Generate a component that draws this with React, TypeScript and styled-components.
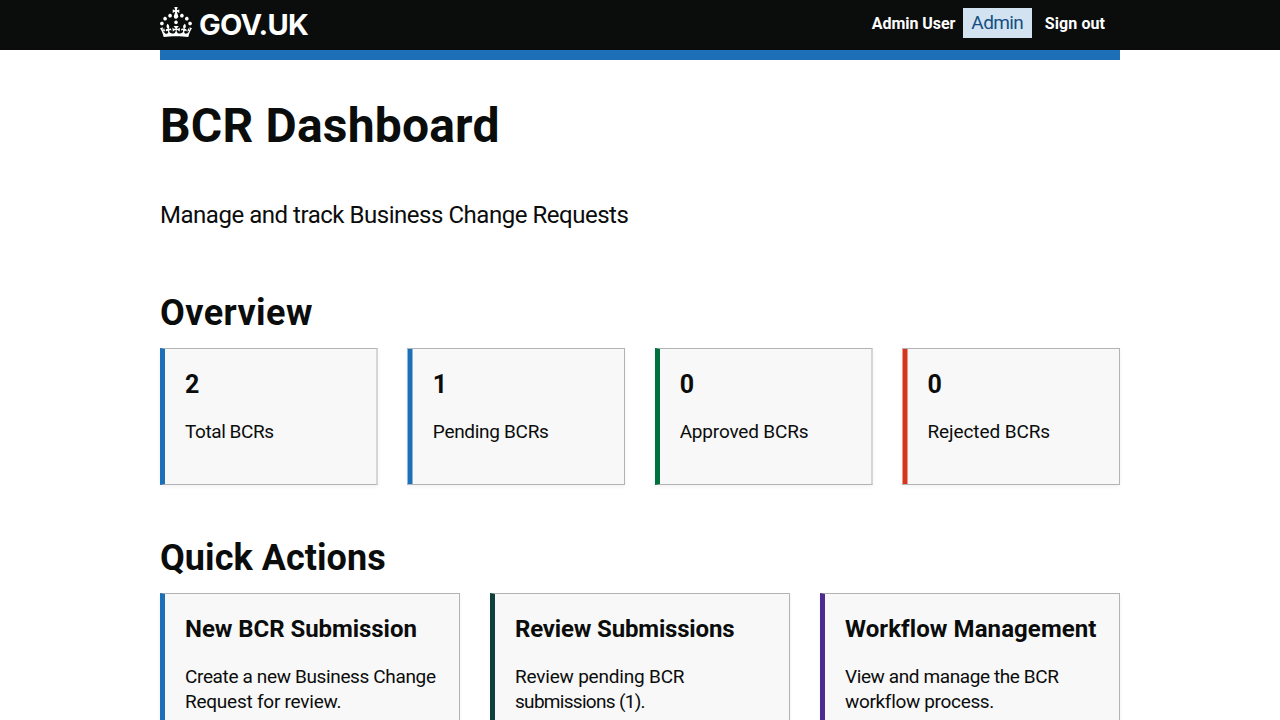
import React from "react";
import styled, { createGlobalStyle, css } from "styled-components";

const GlobalStyle = createGlobalStyle`
  *, *::before, *::after { box-sizing: border-box; }
  html { overflow: hidden; }
  body {
    margin: 0;
    background: #ffffff;
    color: #0b0c0c;
    font-family: "Roboto", "Liberation Sans", Arial, sans-serif;
    -webkit-font-smoothing: antialiased;
  }
  h1, h2, h3, p { margin: 0; }
`;

const Page = styled.div`
  height: 720px;
  overflow: hidden;
`;

const Header = styled.header`
  height: 50px;
  background: #0b0c0c;
`;

const Container = styled.div`
  width: 960px;
  margin: 0 auto;
`;

const HeaderRow = styled(Container)`
  display: flex;
  justify-content: space-between;
  height: 50px;
  padding-right: 15px;
`;

const BlueBar = styled(Container)`
  height: 10px;
  background: #1d70b8;
`;

const Logo = styled.a`
  display: flex;
  align-items: flex-start;
  padding-top: 7px;
  color: #ffffff;
`;

const LogoText = styled.span`
  margin-left: 7px;
  padding-top: 1px;
  font-family: "Inter", "Liberation Sans", Arial, sans-serif;
  font-size: 29px;
  line-height: 34px;
  font-weight: 700;
  letter-spacing: -0.75px;
`;

const Nav = styled.nav`
  display: flex;
  align-items: flex-start;
  padding-top: 8px;
`;

const NavLink = styled.a<{ $ls?: number }>`
  padding-top: 1px;
  color: #ffffff;
  font-size: 16px;
  font-weight: 700;
  line-height: 30px;
  white-space: nowrap;
  letter-spacing: ${(p) => p.$ls ?? 0}px;
`;

const Tag = styled.strong`
  width: 68.5px;
  height: 30px;
  margin: 0 13px 0 8px;
  padding-left: 8px;
  background: #d2e2f1;
  color: #144e81;
  font-size: 19px;
  font-weight: 400;
  line-height: 30px;
  white-space: nowrap;
  letter-spacing: -0.6px;
`;

const Main = styled(Container)`
  padding-top: 41px;
`;

const Title = styled.h1`
  margin-bottom: 49px;
  font-size: 48px;
  line-height: 50px;
  font-weight: 700;
  letter-spacing: 0.2px;
`;

const Lead = styled.p`
  margin-bottom: 63px;
  font-size: 24px;
  line-height: 30px;
  letter-spacing: -0.47px;
`;

const SectionTitle = styled.h2<{ $ls?: number }>`
  margin-bottom: 15px;
  font-size: 36px;
  line-height: 40px;
  font-weight: 700;
  letter-spacing: ${(p) => p.$ls ?? 0}px;
`;

const StatRow = styled.section`
  display: flex;
  justify-content: space-between;
  margin-bottom: 53px;
`;

const ActionGrid = styled.section`
  display: grid;
  grid-template-columns: repeat(3, minmax(0, 1fr));
  gap: 30px;
`;

const Card = styled.article<{ $accent: string }>`
  padding: 20px;
  border: 1px solid #b1b4b6;
  border-left: 5px solid ${(p) => p.$accent};
  background: #f8f8f8;
  box-shadow: 0 2px 4px rgba(0, 0, 0, 0.05);
`;

const softLeftEdge = css<{ $accent: string }>`
  padding-left: 24.5px;
  border-left: 1px solid color-mix(in srgb, ${(p) => p.$accent} 50%, #ffffff);
  box-shadow:
    inset 4px 0 0 ${(p) => p.$accent},
    inset 5px 0 0 color-mix(in srgb, ${(p) => p.$accent} 50%, #f8f8f8),
    0 2px 4px rgba(0, 0, 0, 0.05);
`;

const softRightEdge = css`
  border-right: 2px solid #d5d6d7;
`;

const StatCard = styled(Card)<{ $soft: "left" | "right" }>`
  width: 218px;
  ${(p) => (p.$soft === "left" ? softLeftEdge : softRightEdge)}
`;

const CardTitle = styled.h3<{ $ls?: number }>`
  margin-bottom: 20px;
  font-size: 24px;
  line-height: 30px;
  font-weight: 700;
  white-space: nowrap;
  letter-spacing: ${(p) => p.$ls ?? 0}px;
`;

const StatValue = styled(CardTitle)`
  margin-bottom: 19px;
  padding-top: 1px;
  font-size: 25px;
`;

const CardText = styled.p`
  margin-bottom: 20px;
  font-size: 19px;
  line-height: 25px;
  white-space: nowrap;
`;

const TextLine = styled.span<{ $ls?: number }>`
  display: block;
  letter-spacing: ${(p) => p.$ls ?? 0}px;
`;

interface Line {
  text: string;
  ls: number;
}

interface Stat {
  accent: string;
  soft: "left" | "right";
  value: number;
  label: Line;
}

interface Action {
  accent: string;
  title: Line;
  lines: Line[];
}

const stats: Stat[] = [
  { accent: "#1d70b8", soft: "right", value: 2, label: { text: "Total BCRs", ls: -0.42 } },
  { accent: "#1d70b8", soft: "left", value: 1, label: { text: "Pending BCRs", ls: -0.3 } },
  { accent: "#00703c", soft: "right", value: 0, label: { text: "Approved BCRs", ls: -0.18 } },
  { accent: "#d4351c", soft: "left", value: 0, label: { text: "Rejected BCRs", ls: -0.1 } },
];

const actions: Action[] = [
  {
    accent: "#1d70b8",
    title: { text: "New BCR Submission", ls: -0.05 },
    lines: [
      { text: "Create a new Business Change", ls: -0.36 },
      { text: "Request for review.", ls: -0.24 },
    ],
  },
  {
    accent: "#10403c",
    title: { text: "Review Submissions", ls: -0.17 },
    lines: [
      { text: "Review pending BCR", ls: -0.2 },
      { text: "submissions (1).", ls: -0.7 },
    ],
  },
  {
    accent: "#4c2c92",
    title: { text: "Workflow Management", ls: 0.08 },
    lines: [
      { text: "View and manage the BCR", ls: -0.4 },
      { text: "workflow process.", ls: -0.33 },
    ],
  },
];

const Crown = () => (
  <svg width="32" height="30" viewBox="0 0 32 30" fill="currentColor" aria-hidden="true">
    <path d="M22.6 10.4c-1 .4-2-.1-2.4-1-.4-.9.1-2 1-2.4.9-.4 2 .1 2.4 1s-.1 2-1 2.4m-5.9 6.7c-.9.4-2-.1-2.4-1-.4-.9.1-2 1-2.4.9-.4 2 .1 2.4 1s-.1 2-1 2.4m10.8-3.7c-1 .4-2-.1-2.4-1-.4-.9.1-2 1-2.4.9-.4 2 .1 2.4 1s0 2-1 2.4m3.3 4.8c-1 .4-2-.1-2.4-1-.4-.9.1-2 1-2.4.9-.4 2 .1 2.4 1s-.1 2-1 2.4M17 4.7l2.3 1.2V2.5l-2.3.7-.2-.2.9-3h-3.4l.9 3-.2.2c-.1.1-2.3-.7-2.3-.7v3.4L15 4.7c.1.1.1.2.2.2l-1.3 4c-.1.2-.1.4-.1.6 0 1.1.8 2 1.9 2.2h.7c1-.2 1.9-1.1 1.9-2.1 0-.2 0-.4-.1-.6l-1.3-4c-.1-.2 0-.2.1-.3m-7.6 5.7c.9.4 2-.1 2.4-1 .4-.9-.1-2-1-2.4-.9-.4-2 .1-2.4 1s0 2 1 2.4m-5 3c.9.4 2-.1 2.4-1 .4-.9-.1-2-1-2.4-.9-.4-2 .1-2.4 1s.1 2 1 2.4m-3.2 4.8c.9.4 2-.1 2.4-1 .4-.9-.1-2-1-2.4-.9-.4-2 .1-2.4 1s0 2 1 2.4m14.8 11c4.4 0 8.6.3 12.3.8 1.1-4.5 2.4-7 3.7-8.8l-2.5-.9c.2 1.3.3 1.9 0 2.7-.4-.4-.8-1.1-1.1-2.3l-1.2 4c.7-.5 1.3-.8 2-.9-1.1 2.5-2.6 3.1-3.5 3-1.1-.2-1.7-1.2-1.5-2.1.3-1.2 1.5-1.5 2.1-.1 1.1-2.3-.8-3-2-2.3 1.9-1.9 2.1-3.5.6-5.6-2.1 1.6-2.1 3.2-1.2 5.5-1.2-1.4-3.2-.6-2.5 1.6.9-1.4 2.1-.5 1.9.8-.2 1.1-1.7 2.1-3.5 1.9-2.7-.2-2.9-2.1-2.9-3.6.7-.1 1.9.5 2.9 1.9l.4-4.3c-1.1 1.1-2.1 1.4-3.2 1.4.4-1.2 2.1-3 2.1-3h-5.4s1.7 1.9 2.1 3c-1.1 0-2.1-.2-3.2-1.4l.4 4.3c1-1.4 2.2-2 2.9-1.9-.1 1.5-.2 3.4-2.9 3.6-1.9.2-3.4-.8-3.5-1.9-.2-1.3 1-2.2 1.9-.8.7-2.3-1.2-3-2.5-1.6.9-2.2.9-3.9-1.2-5.5-1.5 2-1.3 3.7.6 5.6-1.2-.7-3.1 0-2 2.3.6-1.4 1.8-1.1 2.1.1.2.9-.3 1.9-1.5 2.1-.9.2-2.4-.5-3.5-3 .6 0 1.2.3 2 .9l-1.2-4c-.3 1.1-.7 1.9-1.1 2.3-.3-.8-.2-1.4 0-2.7l-2.9.9C1.3 23 2.6 25.5 3.7 30c3.7-.5 7.9-.8 12.3-.8" />
  </svg>
);

export default function App() {
  return (
    <Page>
      <GlobalStyle />
      <Header>
        <HeaderRow>
          <Logo>
            <Crown />
            <LogoText>GOV.UK</LogoText>
          </Logo>
          <Nav>
            <NavLink $ls={-0.05}>Admin User</NavLink>
            <Tag>Admin</Tag>
            <NavLink $ls={0.07}>Sign out</NavLink>
          </Nav>
        </HeaderRow>
      </Header>
      <BlueBar />
      <Main>
        <Title>BCR Dashboard</Title>
        <Lead>Manage and track Business Change Requests</Lead>
        <SectionTitle $ls={0.42}>Overview</SectionTitle>
        <StatRow>
          {stats.map(({ accent, soft, value, label }) => (
            <StatCard key={label.text} $accent={accent} $soft={soft}>
              <StatValue>{value}</StatValue>
              <CardText>
                <TextLine $ls={label.ls}>{label.text}</TextLine>
              </CardText>
            </StatCard>
          ))}
        </StatRow>
        <SectionTitle $ls={0.05}>Quick Actions</SectionTitle>
        <ActionGrid>
          {actions.map(({ accent, title, lines }) => (
            <Card key={title.text} $accent={accent}>
              <CardTitle $ls={title.ls}>{title.text}</CardTitle>
              <CardText>
                {lines.map((line) => (
                  <TextLine key={line.text} $ls={line.ls}>
                    {line.text}
                  </TextLine>
                ))}
              </CardText>
            </Card>
          ))}
        </ActionGrid>
      </Main>
    </Page>
  );
}
